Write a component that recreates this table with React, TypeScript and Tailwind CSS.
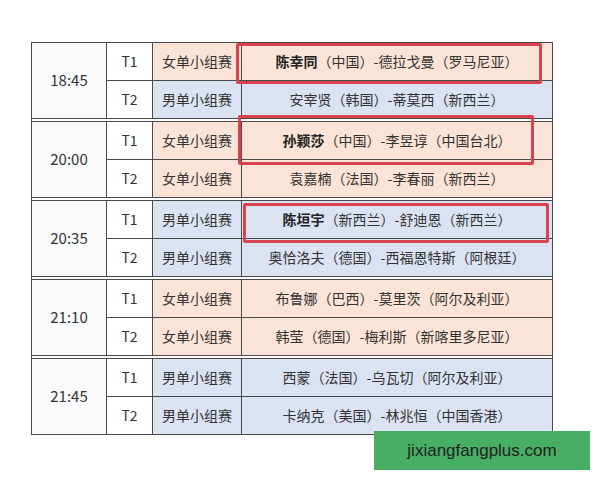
import React from "react";

type Row = { t: string; cat: string; name?: string; rest: string; bold?: boolean };
type Group = { time: string; rows: Row[] };

const PINK = "bg-[#fbe4d7]";
const BLUE = "bg-[#dbe3f2]";

const groups: Group[] = [
  {
    time: "18:45",
    rows: [
      { t: "T1", cat: "女单小组赛", name: "陈幸同", rest: "（中国）-德拉戈曼（罗马尼亚）", bold: true },
      { t: "T2", cat: "男单小组赛", rest: "安宰贤（韩国）-蒂莫西（新西兰）" },
    ],
  },
  {
    time: "20:00",
    rows: [
      { t: "T1", cat: "女单小组赛", name: "孙颖莎", rest: "（中国）-李昱谆（中国台北）", bold: true },
      { t: "T2", cat: "女单小组赛", rest: "袁嘉楠（法国）-李春丽（新西兰）" },
    ],
  },
  {
    time: "20:35",
    rows: [
      { t: "T1", cat: "男单小组赛", name: "陈垣宇", rest: "（新西兰）-舒迪恩（新西兰）", bold: true },
      { t: "T2", cat: "男单小组赛", rest: "奥恰洛夫（德国）-西福恩特斯（阿根廷）" },
    ],
  },
  {
    time: "21:10",
    rows: [
      { t: "T1", cat: "女单小组赛", rest: "布鲁娜（巴西）-莫里茨（阿尔及利亚）" },
      { t: "T2", cat: "女单小组赛", rest: "韩莹（德国）-梅利斯（新喀里多尼亚）" },
    ],
  },
  {
    time: "21:45",
    rows: [
      { t: "T1", cat: "男单小组赛", rest: "西蒙（法国）-乌瓦切（阿尔及利亚）" },
      { t: "T2", cat: "男单小组赛", rest: "卡纳克（美国）-林兆恒（中国香港）" },
    ],
  },
];

function RowView({ row, first }: { row: Row; first: boolean }) {
  const bg = row.cat.startsWith("女") ? PINK : BLUE;
  return (
    <div className={`flex ${first ? "h-[38px] border-b border-[#4a4a4a]" : "h-[37px]"}`}>
      <div className="w-[46px] shrink-0 border-r border-[#4a4a4a] bg-white flex items-center justify-center">
        {row.t}
      </div>
      <div className={`w-[89px] shrink-0 border-r border-[#4a4a4a] ${bg} flex items-center justify-center`}>
        {row.cat}
      </div>
      <div className={`flex-1 ${bg} flex items-center justify-center`}>
        {row.name && <span className="font-bold text-[#222]">{row.name}</span>}
        <span>{row.rest}</span>
      </div>
    </div>
  );
}

export default function App() {
  return (
    <div
      className="relative w-[600px] h-[480px] bg-white overflow-hidden text-[14px] text-[#333]"
      style={{ fontFamily: '"Noto Sans CJK SC", "Noto Sans", sans-serif' }}
    >
      <div className="pl-[31px] pt-[42px]">
        <div className="w-[522px] border border-[#4a4a4a] flex flex-col">
          {groups.map((g, gi) => (
            <div
              key={g.time}
              className={`flex ${gi < groups.length - 1 ? "border-b-4 border-double border-[#4a4a4a]" : ""}`}
            >
              <div className="w-[75px] shrink-0 border-r border-[#4a4a4a] bg-[#f8f9fb] flex items-center justify-center text-[15px]">
                {g.time}
              </div>
              <div className="flex-1 flex flex-col">
                {g.rows.map((r, ri) => (
                  <RowView key={ri} row={r} first={ri === 0} />
                ))}
              </div>
            </div>
          ))}
        </div>
      </div>

      <div className="absolute left-[236px] top-[43px] w-[306px] h-[41px] border-[3px] border-[#d8434f] rounded-[2px]" />
      <div className="absolute left-[238px] top-[115px] w-[296px] h-[50px] border-[3px] border-[#d8434f] rounded-[2px]" />
      <div className="absolute left-[243px] top-[203px] w-[306px] h-[40px] border-[3px] border-[#d8434f] rounded-[2px]" />

      <div
        className="absolute left-[374px] top-[431px] w-[216px] h-[39px] bg-[#48ae64] flex items-center justify-center text-[17px] text-[#1f1f1f]"
        style={{ fontFamily: '"Liberation Sans", Arial, sans-serif' }}
      >
        jixiangfangplus.com
      </div>
    </div>
  );
}
